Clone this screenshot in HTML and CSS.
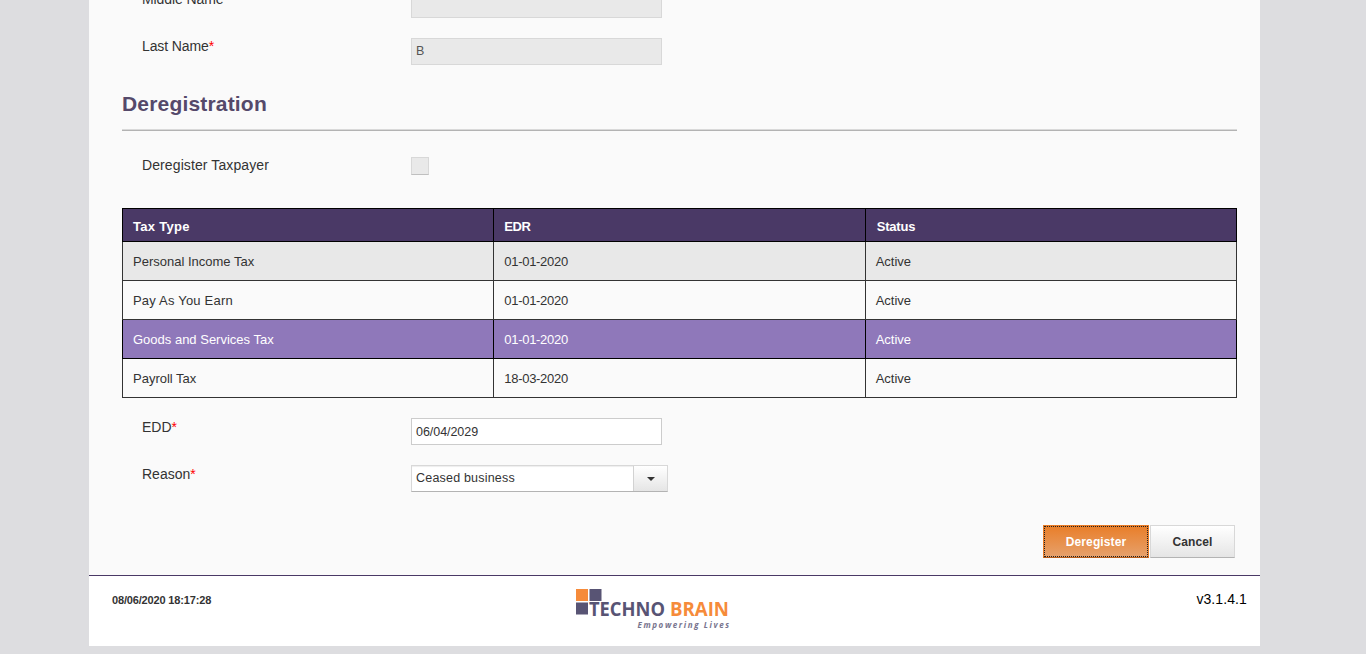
FILE: index.html
```
<!DOCTYPE html>
<html lang="en">
<head>
<meta charset="utf-8">
<title>Deregistration</title>
<link rel="stylesheet" href="styles.css">
</head>
<body>
<div class="page">
  <main class="content">
    <div class="field name-row"><span class="label"><span>Middle Name</span></span><div class="input disabled"></div></div>
    <div class="field name-row"><span class="label"><span>Last Name</span><b class="req">*</b></span><div class="input disabled">B</div></div>
    <h2 class="title">Deregistration</h2>
    <div class="field check-row"><span class="label"><span>Deregister Taxpayer</span></span><div class="checkbox"></div></div>
    <table class="taxes">
      <thead><tr><th>Tax Type</th><th class="edr">EDR</th><th class="status">Status</th></tr></thead>
      <tbody>
        <tr class="shaded"><td>Personal Income Tax</td><td class="date">01-01-2020</td><td>Active</td></tr>
        <tr><td class="paye">Pay As You Earn</td><td class="date">01-01-2020</td><td>Active</td></tr>
        <tr class="selected"><td>Goods and Services Tax</td><td class="date">01-01-2020</td><td>Active</td></tr>
        <tr><td>Payroll Tax</td><td class="date">18-03-2020</td><td>Active</td></tr>
      </tbody>
    </table>
    <div class="field closing-row"><span class="label"><span>EDD</span><b class="req">*</b></span><div class="input">06/04/2029</div></div>
    <div class="field closing-row"><span class="label"><span>Reason</span><b class="req">*</b></span>
      <div class="select"><span class="value">Ceased business</span><span class="arrow"><svg width="8" height="4" viewBox="0 0 8 4"><path d="M0 0H8L4 4Z" fill="#333"/></svg></span></div>
    </div>
    <div class="actions"><div class="btn primary"><span>Deregister</span></div><div class="btn"><span>Cancel</span></div></div>
  </main>
  <footer class="footer">
    <span class="clock">08/06/2020 18:17:28</span>
    <svg class="logo" width="160" height="44" viewBox="0 0 160 44">
      <rect x="1" y="1" width="12" height="12" fill="#f68b3a"/>
      <rect x="14.500" y="1" width="12" height="12" fill="#585474"/>
      <rect x="1" y="14.500" width="12" height="12" fill="#585474"/>
      <text class="brand" y="28" fill="#585474" x="14" textLength="76" lengthAdjust="spacingAndGlyphs">TECHNO</text>
      <text class="brand" y="28" fill="#f68b3a" x="95" textLength="59" lengthAdjust="spacingAndGlyphs">BRAIN</text>
      <text class="tagline" x="62.500" y="39.500" fill="#77748e" textLength="91.500" lengthAdjust="spacing">Empowering Lives</text>
    </svg>
    <span class="version">v3.1.4.1</span>
  </footer>
</div>
</body>
</html>
```
FILE: styles.css
```
* { box-sizing: border-box; }
body { margin: 0; height: 654px; overflow: hidden; background: #dddde0; font-family: "Liberation Sans", Arial, sans-serif; color: #333; }
.page { width: 1171px; height: 646px; margin-left: 89px; background: #fff; overflow: hidden; }
.content { display: flow-root; height: 575px; padding: 0 23px 0 33px; background: #fafafa; }
.field { display: flex; height: 27px; margin-bottom: 20px; padding-left: 20px; }
.field:first-child { margin-top: -9px; }
.label { display: flex; width: 269px; font-size: 14px; line-height: 16px; letter-spacing: .1px; }
.name-row .label { letter-spacing: -.1px; }
.closing-row .label { padding-top: 1px; letter-spacing: 0; }
.req { color: #f00; font-weight: normal; letter-spacing: 0; }
.input { width: 251px; height: 27px; padding: 0 4px; border: 1px solid #ccc; background: #fff; font-size: 12.5px; line-height: 26px; letter-spacing: -.05px; }
.disabled { background: #e9e9e9; border-color: #d8d8d8; line-height: 24px; color: #555; }
.title { height: 66px; width: 1115px; margin: -20px 0 26px; padding-top: 27px; border-bottom: 1px solid #b3b3b3; box-shadow: inset 0 -1px #d9d9d9; font-size: 21px; line-height: 24px; letter-spacing: .18px; color: #55496a; }
.check-row { height: 18px; margin-bottom: 33px; }
.checkbox { width: 18px; height: 18px; border: 1px solid #d8d8d8; border-bottom-color: #bfbfbf; background: #e9e9e9; }
.taxes { width: 1115px; table-layout: fixed; border-collapse: collapse; margin-bottom: 20px; font-size: 13px; }
.taxes th, .taxes td { height: 39px; padding: 2px 10px 0; border: 1px solid #333; text-align: left; line-height: 16px; }
.taxes th { height: 33px; padding-top: 3px; background: #4a3966; border-color: #000; color: #fff; font-weight: bold; letter-spacing: .3px; }
.taxes .edr { letter-spacing: -.4px; }
.taxes .status { padding-left: 11px; letter-spacing: -.2px; }
.taxes .date { letter-spacing: -.3px; }
.taxes .paye { letter-spacing: .2px; }
.taxes .shaded td { background: #e8e8e8; }
.taxes .selected td { background: #8f78ba; border-color: #000; color: #fff; }
.select { display: flex; width: 257px; height: 27px; border: 1px solid #d8d8d8; border-bottom-color: #b3b3b3; background: #fff; box-shadow: inset 0 1px 1px #eee; font-size: 12.5px; line-height: 24px; letter-spacing: .2px; }
.value { flex: 1; padding-left: 4px; }
.arrow { display: flex; width: 34px; align-items: center; justify-content: center; border-left: 1px solid #d2d2d2; background: linear-gradient(#fff, #e5e5e5); padding-left: 1px; padding-top: 1px; }
.actions { display: flex; gap: 1px; justify-content: flex-end; margin-top: 33px; padding-right: 2px; }
.btn { display: flex; align-items: center; justify-content: center; width: 85px; height: 33px; border: 1px solid #d8d8d8; border-bottom-color: #b3b3b3; background: linear-gradient(#fff, #e5e5e5); font-size: 12px; font-weight: bold; letter-spacing: .1px; }
.primary { width: 106px; border-color: #e87b25; border-bottom-color: #b75d19; background: linear-gradient(#e97e29, #e6a16c); color: #fff; outline: 1px dotted #222; outline-offset: -2px; }
.footer { display: flex; height: 71px; padding: 0 13px 0 23px; border-top: 1px solid #4a3966; }
.clock { width: 463px; padding-top: 18px; font-size: 11px; line-height: 13px; font-weight: bold; letter-spacing: -.16px; }
.logo { margin-top: 12px; }
.brand { font: bold 20px "Open Sans", "Noto Sans", sans-serif; }
.tagline { font: italic bold 8px "Open Sans", "Noto Sans", sans-serif; }
.version { flex: 1; padding-top: 15px; text-align: right; font-size: 14px; line-height: 16px; letter-spacing: .1px; color: #000; }
```
